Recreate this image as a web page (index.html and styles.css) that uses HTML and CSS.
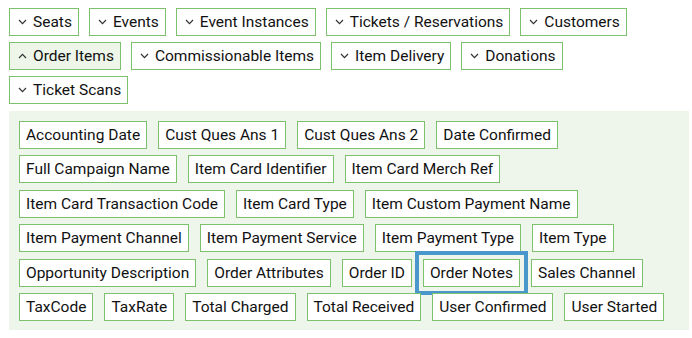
FILE: index.html
```html
<!DOCTYPE html>
<html lang="en">
<head>
    <meta charset="UTF-8">
    <meta name="viewport" content="width=device-width, initial-scale=1.0">
    <title>Report Fields</title>
    <link rel="stylesheet" href="styles.css">
</head>
<body>
    <div class="wrap">
        <div class="groups">
            <button class="group"><svg class="chev" viewBox="0 0 9 6"><polyline points="1,1 4.5,4.6 8,1"/></svg>Seats</button>
            <button class="group"><svg class="chev" viewBox="0 0 9 6"><polyline points="1,1 4.5,4.6 8,1"/></svg>Events</button>
            <button class="group"><svg class="chev" viewBox="0 0 9 6"><polyline points="1,1 4.5,4.6 8,1"/></svg>Event Instances</button>
            <button class="group"><svg class="chev" viewBox="0 0 9 6"><polyline points="1,1 4.5,4.6 8,1"/></svg>Tickets / Reservations</button>
            <button class="group"><svg class="chev" viewBox="0 0 9 6"><polyline points="1,1 4.5,4.6 8,1"/></svg>Customers</button>
            <button class="group open"><svg class="chev" viewBox="0 0 9 6"><polyline points="1,5 4.5,1.4 8,5"/></svg>Order Items</button>
            <button class="group"><svg class="chev" viewBox="0 0 9 6"><polyline points="1,1 4.5,4.6 8,1"/></svg>Commissionable Items</button>
            <button class="group"><svg class="chev" viewBox="0 0 9 6"><polyline points="1,1 4.5,4.6 8,1"/></svg>Item Delivery</button>
            <button class="group"><svg class="chev" viewBox="0 0 9 6"><polyline points="1,1 4.5,4.6 8,1"/></svg>Donations</button>
            <button class="group"><svg class="chev" viewBox="0 0 9 6"><polyline points="1,1 4.5,4.6 8,1"/></svg>Ticket Scans</button>
        </div>

        <div class="fields">
            <button class="field">Accounting Date</button>
            <button class="field">Cust Ques Ans 1</button>
            <button class="field">Cust Ques Ans 2</button>
            <button class="field">Date Confirmed</button>
            <button class="field">Full Campaign Name</button>
            <button class="field">Item Card Identifier</button>
            <button class="field">Item Card Merch Ref</button>
            <button class="field">Item Card Transaction Code</button>
            <button class="field">Item Card Type</button>
            <button class="field">Item Custom Payment Name</button>
            <button class="field">Item Payment Channel</button>
            <button class="field">Item Payment Service</button>
            <button class="field">Item Payment Type</button>
            <button class="field">Item Type</button>
            <button class="field">Opportunity Description</button>
            <button class="field">Order Attributes</button>
            <button class="field">Order ID</button>
            <button class="field focus">Order Notes</button>
            <button class="field">Sales Channel</button>
            <button class="field">TaxCode</button>
            <button class="field">TaxRate</button>
            <button class="field">Total Charged</button>
            <button class="field">Total Received</button>
            <button class="field">User Confirmed</button>
            <button class="field">User Started</button>
        </div>
    </div>
</body>
</html>
```
FILE: styles.css
```css
* {
    box-sizing: border-box;
    margin: 0;
}
body {
    font-family: Roboto, "Liberation Sans", sans-serif;
    color: #111;
    background: #fff;
}
.wrap {
    padding: 8px 3px 0 9px;
}
.groups {
    display: flex;
    flex-wrap: wrap;
    gap: 6px 10px;
    max-width: 620px;
}
button {
    font-family: inherit;
    font-size: 15.5px;
    color: #111;
    height: 28px;
    border: 1px solid #7dc16d;
    border-radius: 0;
    background-color: #fff;
    display: inline-flex;
    align-items: center;
    cursor: pointer;
}
.group {
    padding: 0 6px 0 8px;
}
.group.open {
    background-color: #eef6ea;
}
.chev {
    width: 9px;
    height: 6px;
    margin-right: 6px;
    fill: none;
    stroke: #333;
    stroke-width: 1.2;
}
.fields {
    margin-top: 7px;
    width: 680px;
    padding: 10px 10px 9px 10px;
    background-color: #eef6ec;
    display: flex;
    flex-wrap: wrap;
    gap: 6.4px 11px;
}
.field {
    padding: 0 6px;
}
.field.focus {
    outline: 4px solid #4a98cb;
    outline-offset: 4px;
}
```
